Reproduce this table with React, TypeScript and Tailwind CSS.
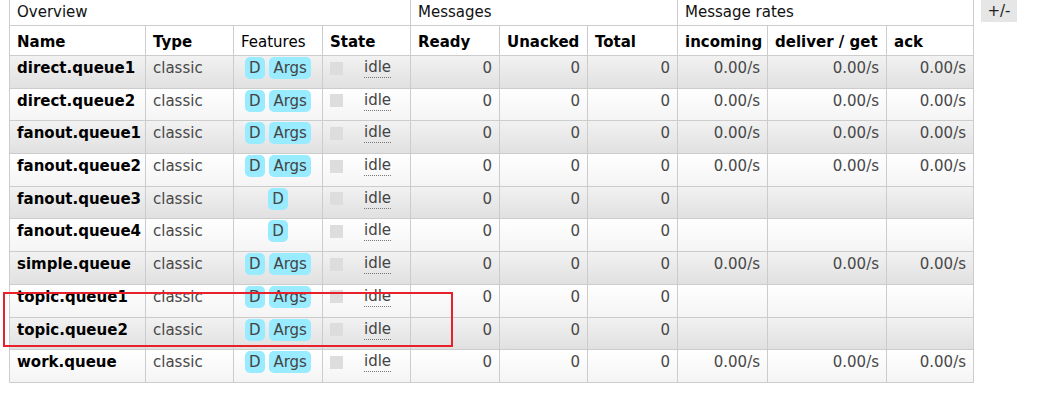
import React from 'react';

type Queue = {
    name: string;
    args: boolean;
    rates: boolean;
};

const queues: Queue[] = [
    { name: 'direct.queue1', args: true, rates: true },
    { name: 'direct.queue2', args: true, rates: true },
    { name: 'fanout.queue1', args: true, rates: true },
    { name: 'fanout.queue2', args: true, rates: true },
    { name: 'fanout.queue3', args: false, rates: false },
    { name: 'fanout.queue4', args: false, rates: false },
    { name: 'simple.queue', args: true, rates: true },
    { name: 'topic.queue1', args: true, rates: false },
    { name: 'topic.queue2', args: true, rates: false },
    { name: 'work.queue', args: true, rates: true },
];

const th = "border border-[#cccccc] px-[7px] text-left align-middle";
const td = "border border-[#cccccc] px-[7px] align-top pt-px leading-[22px]";

const Badge = ({ children }: { children: React.ReactNode }) => (
    <span className="inline-block rounded-[5px] bg-[#99ebff] px-[4px] leading-[22px] text-[#444]">
        {children}
    </span>
);

const App = () => {
    return (
        <div
            className="flex items-start bg-white text-[15px] text-[#484848]"
            style={{ fontFamily: '"DejaVu Sans", Verdana, sans-serif' }}
        >
            <div className="relative ml-[9px]">
                <table className="w-[964px] table-fixed border-collapse -mt-px">
                    <colgroup>
                        <col className="w-[136px]" />
                        <col className="w-[88px]" />
                        <col className="w-[89px]" />
                        <col className="w-[88px]" />
                        <col className="w-[89px]" />
                        <col className="w-[88px]" />
                        <col className="w-[90px]" />
                        <col className="w-[90px]" />
                        <col className="w-[119px]" />
                        <col className="w-[87px]" />
                    </colgroup>
                    <thead>
                        <tr className="h-[26px] bg-white text-[#111]">
                            <th colSpan={4} className={`${th} font-normal`}>Overview</th>
                            <th colSpan={3} className={`${th} font-normal`}>Messages</th>
                            <th colSpan={3} className={`${th} font-normal`}>Message rates</th>
                        </tr>
                        <tr className="h-[30px] bg-white text-black">
                            <th className={`${th} pt-[3px] font-bold`}>Name</th>
                            <th className={`${th} pt-[3px] font-bold`}>Type</th>
                            <th className={`${th} pt-[3px] font-normal`}>Features</th>
                            <th className={`${th} pt-[3px] font-bold`}>State</th>
                            <th className={`${th} pt-[3px] font-bold`}>Ready</th>
                            <th className={`${th} pt-[3px] font-bold`}>Unacked</th>
                            <th className={`${th} pt-[3px] font-bold`}>Total</th>
                            <th className={`${th} pt-[3px] font-bold`}>incoming</th>
                            <th className={`${th} pt-[3px] font-bold`}>deliver / get</th>
                            <th className={`${th} pt-[3px] font-bold`}>ack</th>
                        </tr>
                    </thead>
                    <tbody>
                        {queues.map((q, i) => (
                            <tr
                                key={q.name}
                                className={
                                    i % 2 === 0
                                        ? "h-[32.7px] bg-gradient-to-b from-[#f2f2f2] to-[#e0e0e0]"
                                        : "h-[32.7px] bg-gradient-to-b from-[#ffffff] to-[#f4f4f4]"
                                }
                            >
                                <td className={`${td} font-bold text-black`}>{q.name}</td>
                                <td className={td}>classic</td>
                                <td className={`${td} pt-[2px] text-center`}>
                                    <Badge>D</Badge>
                                    {q.args && (
                                        <>
                                            {' '}
                                            <Badge>Args</Badge>
                                        </>
                                    )}
                                </td>
                                <td className={td}>
                                    <div className="flex items-center">
                                        <span className="mt-[1px] inline-block h-[13px] w-[13px] bg-[#dddddd]" />
                                        <span className="ml-[21px] border-b border-dotted border-[#777] leading-[20px] text-[#444]">
                                            idle
                                        </span>
                                    </div>
                                </td>
                                <td className={`${td} text-right`}>0</td>
                                <td className={`${td} text-right`}>0</td>
                                <td className={`${td} text-right`}>0</td>
                                <td className={`${td} text-right`}>{q.rates ? '0.00/s' : ''}</td>
                                <td className={`${td} text-right`}>{q.rates ? '0.00/s' : ''}</td>
                                <td className={`${td} text-right`}>{q.rates ? '0.00/s' : ''}</td>
                            </tr>
                        ))}
                    </tbody>
                </table>
                {/* highlight around topic queues */}
                <div className="absolute left-[-6px] top-[292px] h-[55px] w-[450px] border-2 border-[#e8202a]" />
            </div>
            <div className="ml-[7px] h-[22px] w-[36px] bg-[#e6e6e6] text-center leading-[22px] text-[#222]">
                +/-
            </div>
        </div>
    );
};

export default App;
